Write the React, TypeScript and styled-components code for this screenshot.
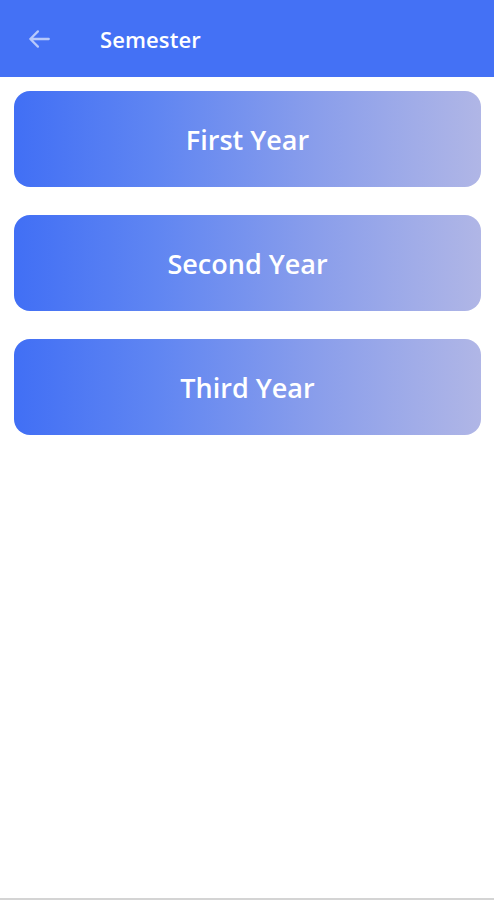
import { FC } from "react";
import styled, { createGlobalStyle } from "styled-components";

const GlobalStyle = createGlobalStyle`
  html, body {
    margin: 0;
    padding: 0;
    background: #ffffff;
    font-family: "Open Sans", "Noto Sans", sans-serif;
  }
`;

const Screen = styled.div`
  width: 494px;
  height: 900px;
  box-sizing: border-box;
  display: flex;
  flex-direction: column;
  border-bottom: 2px solid #d4d4d4;
  overflow: hidden;
`;

const Header = styled.header`
  height: 77px;
  flex-shrink: 0;
  background-color: #4471f5;
  display: flex;
  align-items: center;
  padding-left: 25px;
  gap: 47px;
`;

const BackButton = styled.button`
  background: none;
  border: none;
  padding: 0;
  width: 28px;
  height: 28px;
  display: flex;
  align-items: center;
  justify-content: center;
  cursor: pointer;
`;

const Title = styled.h1`
  margin: 0;
  color: #ffffff;
  font-size: 22px;
  font-weight: 600;
  letter-spacing: 0.1px;
`;

const YearList = styled.div`
  display: flex;
  flex-direction: column;
  gap: 28px;
  padding: 14px 13px 0 14px;
`;

const YearCard = styled.button`
  height: 96px;
  border: none;
  border-radius: 16px;
  background: linear-gradient(90deg, #416ff5 0%, #5f85f2 30%, #8a9eeb 65%, #b0b6e6 100%);
  color: #ffffff;
  font-family: "Open Sans", "Noto Sans", sans-serif;
  font-size: 27px;
  font-weight: 600;
  display: flex;
  align-items: center;
  justify-content: center;
  cursor: pointer;
`;

const years = ["First Year", "Second Year", "Third Year"];

const App: FC = () => {
  return (
    <>
      <GlobalStyle />
      <Screen>
        <Header>
          <BackButton aria-label="Back">
            <svg width="26" height="26" viewBox="0 0 24 24" fill="none">
              <path
                d="M21 12H4M11 5l-7 7 7 7"
                stroke="#b7c9fb"
                strokeWidth="2.1"
                strokeLinecap="round"
                strokeLinejoin="round"
              />
            </svg>
          </BackButton>
          <Title>Semester</Title>
        </Header>
        <YearList>
          {years.map((year) => (
            <YearCard key={year}>{year}</YearCard>
          ))}
        </YearList>
      </Screen>
    </>
  );
};

export default App;
